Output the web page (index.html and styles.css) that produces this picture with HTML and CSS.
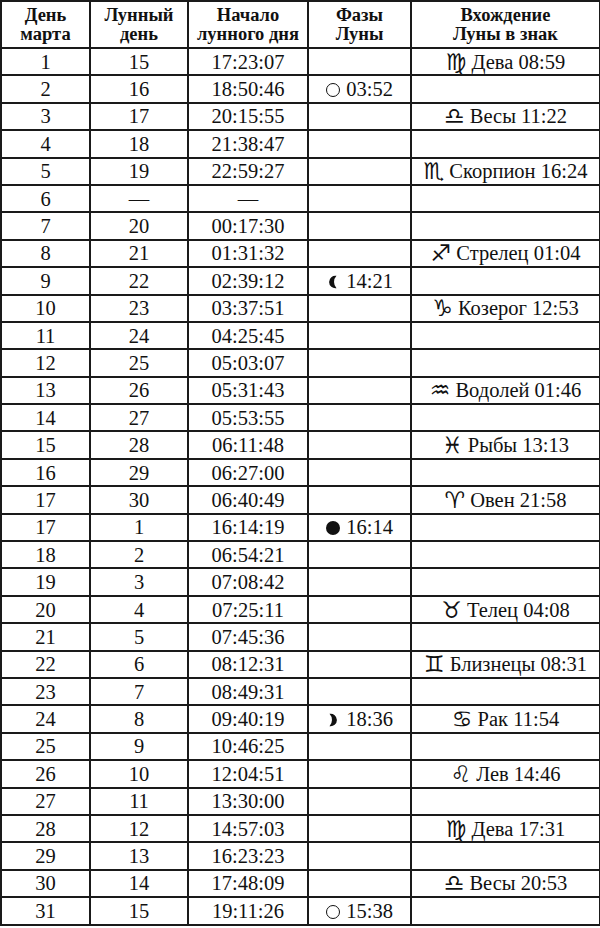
FILE: index.html
```html
<!DOCTYPE html>
<html lang="ru">
<head>
<meta charset="utf-8">
<link rel="stylesheet" href="styles.css">
</head>
<body>
<table class="moon">
<colgroup>
<col class="c1"><col class="c2"><col class="c3"><col class="c4"><col class="c5">
</colgroup>
<thead>
<tr><th>День<br>марта</th><th>Лунный<br>день</th><th>Начало<br>лунного дня</th><th>Фазы<br>Луны</th><th>Вхождение<br>Луны в знак</th></tr>
</thead>
<tbody>
<tr><td>1</td><td>15</td><td>17:23:07</td><td></td><td><span class="z">♍&#xFE0E;</span> Дева 08:59</td></tr>
<tr><td>2</td><td>16</td><td>18:50:46</td><td><span class="ph full"></span> 03:52</td><td></td></tr>
<tr><td>3</td><td>17</td><td>20:15:55</td><td></td><td><span class="z">♎&#xFE0E;</span> Весы 11:22</td></tr>
<tr><td>4</td><td>18</td><td>21:38:47</td><td></td><td></td></tr>
<tr><td>5</td><td>19</td><td>22:59:27</td><td></td><td><span class="z">♏&#xFE0E;</span> Скорпион 16:24</td></tr>
<tr><td>6</td><td>—</td><td>—</td><td></td><td></td></tr>
<tr><td>7</td><td>20</td><td>00:17:30</td><td></td><td></td></tr>
<tr><td>8</td><td>21</td><td>01:31:32</td><td></td><td><span class="z">♐&#xFE0E;</span> Стрелец 01:04</td></tr>
<tr><td>9</td><td>22</td><td>02:39:12</td><td><span class="ph"><svg viewBox="0 0 14 14" width="14" height="14"><path d="M10.5 0.8A6.3 6.3 0 1 0 10.5 13.2A9 9 0 0 1 10.5 0.8Z" fill="#111"/></svg></span> 14:21</td><td></td></tr>
<tr><td>10</td><td>23</td><td>03:37:51</td><td></td><td><span class="z">♑&#xFE0E;</span> Козерог 12:53</td></tr>
<tr><td>11</td><td>24</td><td>04:25:45</td><td></td><td></td></tr>
<tr><td>12</td><td>25</td><td>05:03:07</td><td></td><td></td></tr>
<tr><td>13</td><td>26</td><td>05:31:43</td><td></td><td><span class="z">♒&#xFE0E;</span> Водолей 01:46</td></tr>
<tr><td>14</td><td>27</td><td>05:53:55</td><td></td><td></td></tr>
<tr><td>15</td><td>28</td><td>06:11:48</td><td></td><td><span class="z">♓&#xFE0E;</span> Рыбы 13:13</td></tr>
<tr><td>16</td><td>29</td><td>06:27:00</td><td></td><td></td></tr>
<tr><td>17</td><td>30</td><td>06:40:49</td><td></td><td><span class="z">♈&#xFE0E;</span> Овен 21:58</td></tr>
<tr><td>17</td><td>1</td><td>16:14:19</td><td><span class="ph new"></span> 16:14</td><td></td></tr>
<tr><td>18</td><td>2</td><td>06:54:21</td><td></td><td></td></tr>
<tr><td>19</td><td>3</td><td>07:08:42</td><td></td><td></td></tr>
<tr><td>20</td><td>4</td><td>07:25:11</td><td></td><td><span class="z">♉&#xFE0E;</span> Телец 04:08</td></tr>
<tr><td>21</td><td>5</td><td>07:45:36</td><td></td><td></td></tr>
<tr><td>22</td><td>6</td><td>08:12:31</td><td></td><td><span class="z">♊&#xFE0E;</span> Близнецы 08:31</td></tr>
<tr><td>23</td><td>7</td><td>08:49:31</td><td></td><td></td></tr>
<tr><td>24</td><td>8</td><td>09:40:19</td><td><span class="ph"><svg viewBox="0 0 14 14" width="14" height="14"><path d="M3.5 0.8A6.3 6.3 0 1 1 3.5 13.2A9 9 0 0 0 3.5 0.8Z" fill="#111"/></svg></span> 18:36</td><td><span class="z">♋&#xFE0E;</span> Рак 11:54</td></tr>
<tr><td>25</td><td>9</td><td>10:46:25</td><td></td><td></td></tr>
<tr><td>26</td><td>10</td><td>12:04:51</td><td></td><td><span class="z">♌&#xFE0E;</span> Лев 14:46</td></tr>
<tr><td>27</td><td>11</td><td>13:30:00</td><td></td><td></td></tr>
<tr><td>28</td><td>12</td><td>14:57:03</td><td></td><td><span class="z">♍&#xFE0E;</span> Дева 17:31</td></tr>
<tr><td>29</td><td>13</td><td>16:23:23</td><td></td><td></td></tr>
<tr><td>30</td><td>14</td><td>17:48:09</td><td></td><td><span class="z">♎&#xFE0E;</span> Весы 20:53</td></tr>
<tr><td>31</td><td>15</td><td>19:11:26</td><td><span class="ph full"></span> 15:38</td><td></td></tr>
</tbody>
</table>
</body>
</html>
```
FILE: styles.css
```css
html, body {
  margin: 0;
  padding: 0;
  background: #fff;
}
body {
  font-family: "Liberation Serif", "Times New Roman", serif;
  color: #111;
}
.moon {
  border-collapse: collapse;
  table-layout: fixed;
  width: 599px;
  margin: 0;
}
.c1 { width: 89px; }
.c2 { width: 98px; }
.c3 { width: 120px; }
.c4 { width: 103px; }
.c5 { width: 189px; }
.moon th, .moon td {
  border: 2px solid #1a1a1a;
  text-align: center;
  padding: 0;
  overflow: hidden;
  white-space: nowrap;
}
.moon th {
  height: 44px;
  font-weight: bold;
  font-size: 18.5px;
  line-height: 19px;
  padding-top: 1px;
  vertical-align: middle;
}
.moon td {
  height: 25.4px;
  font-size: 20.5px;
  line-height: 22px;
  vertical-align: middle;
}
.z {
  font-family: "DejaVu Sans", sans-serif;
  font-size: 23px;
  line-height: 0;
  vertical-align: -1px;
}
.ph {
  display: inline-block;
  width: 14px;
  height: 14px;
  vertical-align: -1px;
  box-sizing: border-box;
  border-radius: 50%;
  margin-right: 1px;
}
.ph svg { display: block; }
.ph.full { width: 14px; height: 14px; border: 1.6px solid #111; }
.ph.new { background: #111; }
```
